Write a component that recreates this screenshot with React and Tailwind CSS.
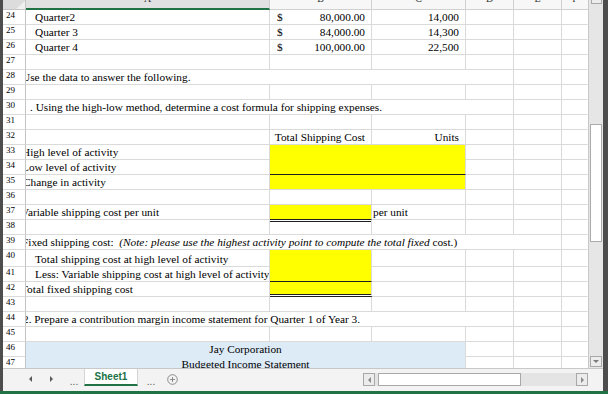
import React from 'react';

function Cell({ w, className = '', children, bb = 'border-b-[#dadada]', br = 'border-r-[#dadada]' }) {
  return (
    <div className={`${w} shrink-0 h-full border-r border-b ${br} ${bb} overflow-hidden whitespace-nowrap leading-[14px] ${className}`}>
      {children}
    </div>
  );
}

function Row({ n, h = 'h-[15px]', children }) {
  return (
    <div className={`flex ${h} shrink-0`}>
      <div className="w-[23px] shrink-0 h-full border-r border-b border-r-[#c4c4c4] border-b-[#dadada] pl-[3px] text-[9px] leading-[11px] bg-white">
        {n}
      </div>
      {children}
    </div>
  );
}

function Rest() {
  return (
    <>
      <Cell w="w-[48px]" />
      <Cell w="w-[48px]" />
      <Cell w="w-[26px]" br="border-r-transparent" />
    </>
  );
}

function EF() {
  return (
    <>
      <Cell w="w-[48px]" />
      <Cell w="w-[26px]" br="border-r-transparent" />
    </>
  );
}

function Money({ v }) {
  return (
    <Cell w="w-[102px]" className="flex justify-between pl-[7px] pr-[6px]">
      <span>$</span>
      <span>{v}</span>
    </Cell>
  );
}

function Empty({ n }) {
  return (
    <Row n={n}>
      <Cell w="w-[244px]" />
      <Cell w="w-[102px]" />
      <Cell w="w-[94px]" />
      <Rest />
    </Row>
  );
}

function Clip({ children, ml = '-ml-[4px]' }) {
  return <span className={`inline-block ${ml}`}>{children}</span>;
}

function HeadCell({ w, letter, sel = false, last = false }) {
  return (
    <div
      className={`${w} shrink-0 h-full flex justify-center overflow-hidden border-b ${last ? '' : 'border-r border-r-[#d0d0d0]'} ${
        sel ? 'bg-[#e1e1e1] border-b-2 border-b-[#217346]' : 'bg-[#f7f7f7] border-b-[#d0d0d0]'
      }`}
    >
      <span className="block text-[10px] leading-none -mt-[6px] text-[#333]">{letter}</span>
    </div>
  );
}

function Tri({ dir = 'left', c = '#5a5a5a' }) {
  const pts = dir === 'left' ? '3,0 3,6 0,3' : dir === 'right' ? '0,0 0,6 3,3' : '0,0 6,0 3,3';
  const w = dir === 'down' ? 6 : 3;
  const h = dir === 'down' ? 3 : 6;
  return (
    <svg width={w} height={h} viewBox={`0 0 ${w} ${h}`}>
      <polygon points={pts} fill={c} />
    </svg>
  );
}

export default function App() {
  return (
    <div className="w-[608px] h-[394px] overflow-hidden flex flex-col bg-white font-['Liberation_Serif',serif] text-[11.3px] text-black">
      <div className="flex h-[391px] shrink-0">
        <div className="w-[3px] shrink-0 bg-[#4d4d4d]" />
        <div className="w-[600px] shrink-0 flex flex-col">
          <div className="flex h-[368px] shrink-0 overflow-hidden">
            {/* sheet */}
            <div className="w-[585px] shrink-0 flex flex-col overflow-hidden">
              <div className="flex h-[10px] shrink-0">
                <div className="w-[23px] shrink-0 h-full bg-[#dcdcdc] border-r border-b border-[#c4c4c4] flex justify-end items-end">
                  <svg width="9" height="8" viewBox="0 0 9 8">
                    <polygon points="9,0 9,8 0,8" fill="#f0f0f0" />
                  </svg>
                </div>
                <HeadCell w="w-[244px]" letter="A" sel />
                <HeadCell w="w-[102px]" letter="B" />
                <HeadCell w="w-[94px]" letter="C" />
                <HeadCell w="w-[48px]" letter="D" />
                <HeadCell w="w-[48px]" letter="E" />
                <HeadCell w="w-[26px]" letter="F" last />
              </div>

              <Row n="24">
                <Cell w="w-[244px]" className="pl-[9px]">Quarter2</Cell>
                <Money v="80,000.00" />
                <Cell w="w-[94px]" className="text-right pr-[6px]">14,000</Cell>
                <Rest />
              </Row>
              <Row n="25">
                <Cell w="w-[244px]" className="pl-[9px]">Quarter 3</Cell>
                <Money v="84,000.00" />
                <Cell w="w-[94px]" className="text-right pr-[6px]">14,300</Cell>
                <Rest />
              </Row>
              <Row n="26">
                <Cell w="w-[244px]" className="pl-[9px]">Quarter 4</Cell>
                <Money v="100,000.00" />
                <Cell w="w-[94px]" className="text-right pr-[6px]">22,500</Cell>
                <Rest />
              </Row>
              <Empty n="27" />
              <Row n="28">
                <Cell w="w-[488px]">
                  <Clip>Use the data to answer the following.</Clip>
                </Cell>
                <EF />
              </Row>
              <Empty n="29" />
              <Row n="30">
                <Cell w="w-[488px]" className="pl-[4px]">. Using the high-low method, determine a cost formula for shipping expenses.</Cell>
                <EF />
              </Row>
              <Empty n="31" />
              <Row n="32">
                <Cell w="w-[244px]" />
                <Cell w="w-[102px]" className="text-right pr-[6px]">Total Shipping Cost</Cell>
                <Cell w="w-[94px]" className="text-right pr-[6px]">Units</Cell>
                <Rest />
              </Row>
              <Row n="33">
                <Cell w="w-[244px]">
                  <Clip>High level of activity</Clip>
                </Cell>
                <Cell w="w-[196px]" className="bg-[#ffff00]" bb="border-b-transparent" />
                <Rest />
              </Row>
              <Row n="34">
                <Cell w="w-[244px]">
                  <Clip>Low level of activity</Clip>
                </Cell>
                <Cell w="w-[196px]" className="bg-[#ffff00]" bb="border-b-[#1e1e1e]" />
                <Rest />
              </Row>
              <Row n="35">
                <Cell w="w-[244px]">
                  <Clip ml="-ml-[3px]">Change in activity</Clip>
                </Cell>
                <Cell w="w-[196px]" className="bg-[#ffff00]" />
                <Rest />
              </Row>
              <Empty n="36" />
              <Row n="37">
                <Cell w="w-[244px]">
                  <Clip ml="-ml-[5px]">Variable shipping cost per unit</Clip>
                </Cell>
                <Cell w="w-[102px]" className="bg-[#ffff00]" bb="border-b-[#1e1e1e]" />
                <Cell w="w-[94px]" className="pl-[1px]">per unit</Cell>
                <Rest />
              </Row>
              <Row n="38">
                <Cell w="w-[244px]" />
                <Cell w="w-[102px]">
                  <div className="mt-[1px] h-px bg-[#1e1e1e]" />
                </Cell>
                <Cell w="w-[94px]" />
                <Rest />
              </Row>
              <Row n="39">
                <Cell w="w-[536px]">
                  <Clip>
                    <span className="whitespace-pre">Fixed shipping cost:  </span>
                    <span className="italic">(Note: please use the highest activity point to compute the total fixed </span>
                    <span>cost.)</span>
                  </Clip>
                </Cell>
                <Cell w="w-[26px]" br="border-r-transparent" />
              </Row>
              <Row n="40" h="h-[17px]">
                <Cell w="w-[244px]" className="pl-[9px] pt-[2px]">Total shipping cost at high level of activity</Cell>
                <Cell w="w-[102px]" className="bg-[#ffff00]" bb="border-b-transparent" />
                <Cell w="w-[94px]" />
                <Rest />
              </Row>
              <Row n="41">
                <Cell w="w-[244px]" className="pl-[9px]">Less: Variable shipping cost at high level of activity</Cell>
                <Cell w="w-[102px]" className="bg-[#ffff00]" bb="border-b-[#1e1e1e]" />
                <Cell w="w-[94px]" />
                <Rest />
              </Row>
              <Row n="42">
                <Cell w="w-[244px]">
                  <Clip ml="-ml-[5px]">Total fixed shipping cost</Clip>
                </Cell>
                <Cell w="w-[102px]" className="bg-[#ffff00] bg-clip-padding border-double border-b-[3px]" bb="border-b-[#1e1e1e]" />
                <Cell w="w-[94px]" />
                <Rest />
              </Row>
              <Empty n="43" />
              <Row n="44">
                <Cell w="w-[488px]">
                  <Clip ml="-ml-[3px]">2. Prepare a contribution margin income statement for Quarter 1 of Year 3.</Clip>
                </Cell>
                <EF />
              </Row>
              <Empty n="45" />
              <Row n="46">
                <Cell w="w-[440px]" className="bg-[#ddebf7] text-center" bb="border-b-transparent">Jay Corporation</Cell>
                <Rest />
              </Row>
              <Row n="47">
                <Cell w="w-[440px]" className="bg-[#ddebf7] text-center" bb="border-b-transparent">Budgeted Income Statement</Cell>
                <Rest />
              </Row>
            </div>

            {/* vertical scrollbar */}
            <div className="w-[15px] shrink-0 h-full bg-[#e6e6e6] border-l border-[#c8c8c8] flex flex-col items-center">
              <div className="w-[11px] h-[4px] border-x border-b border-[#a8a8a8] bg-[#ececec]" />
              <div className="h-[120px] shrink-0" />
              <div className="w-[12px] h-[118px] shrink-0 bg-white border border-[#ababab]" />
              <div className="flex-1" />
              <div className="w-[12px] h-[11px] shrink-0 mb-[1px] border border-[#a8a8a8] bg-[#ececec] flex items-center justify-center">
                <Tri dir="down" c="#7a7a7a" />
              </div>
            </div>
          </div>

          {/* tab bar */}
          <div className="h-[23px] shrink-0 flex bg-[#f3f3f3] border-t border-[#c8c8c8] font-['Liberation_Sans',sans-serif]">
            <div className="w-[23px] shrink-0" />
            <div className="w-[9px] shrink-0 flex items-center justify-center pb-[2px]">
              <Tri dir="left" />
            </div>
            <div className="w-[12px] shrink-0" />
            <div className="w-[9px] shrink-0 flex items-center justify-center pb-[2px]">
              <Tri dir="right" />
            </div>
            <div className="w-[12px] shrink-0" />
            <div className="w-[12px] shrink-0 flex items-center justify-center text-[10px] leading-none text-[#555] pt-[4px]">...</div>
            <div className="w-[4px] shrink-0" />
            <div className="w-[54px] shrink-0 h-[17px] bg-white border-x border-[#d4d4d4] border-b-[2px] border-b-[#217346] flex items-center justify-center text-[10px] font-bold text-[#217346] leading-none">
              Sheet1
            </div>
            <div className="w-[7px] shrink-0" />
            <div className="w-[12px] shrink-0 flex items-center justify-center text-[10px] leading-none text-[#555] pt-[4px]">...</div>
            <div className="w-[9px] shrink-0" />
            <div className="w-[12px] shrink-0 flex items-center justify-center pb-[2px]">
              <svg width="11" height="11" viewBox="0 0 11 11">
                <circle cx="5.5" cy="5.5" r="4.8" fill="none" stroke="#8a8a8a" strokeWidth="1" />
                <line x1="5.5" y1="3" x2="5.5" y2="8" stroke="#8a8a8a" strokeWidth="1" />
                <line x1="3" y1="5.5" x2="8" y2="5.5" stroke="#8a8a8a" strokeWidth="1" />
              </svg>
            </div>
            <div className="w-[185px] shrink-0" />
            <div className="w-[225px] shrink-0 flex pt-[4px]">
              <div className="w-[12px] h-[13px] shrink-0 border border-[#a8a8a8] bg-[#ececec] flex items-center justify-center">
                <Tri dir="left" c="#8a8a8a" />
              </div>
              <div className="w-[3px] h-[13px] shrink-0 bg-[#e4e4e4]" />
              <div className="w-[143px] h-[13px] shrink-0 bg-white border border-[#a8a8a8]" />
              <div className="w-[55px] h-[13px] shrink-0 bg-[#e4e4e4]" />
              <div className="w-[12px] h-[13px] shrink-0 border border-[#a8a8a8] bg-[#ececec] flex items-center justify-center">
                <Tri dir="right" c="#8a8a8a" />
              </div>
            </div>
            <div className="w-[15px] shrink-0" />
          </div>
        </div>
        <div className="w-[5px] shrink-0 bg-[#4d4d4d]" />
      </div>
      <div className="h-[3px] shrink-0 bg-[#217346]" />
    </div>
  );
}
